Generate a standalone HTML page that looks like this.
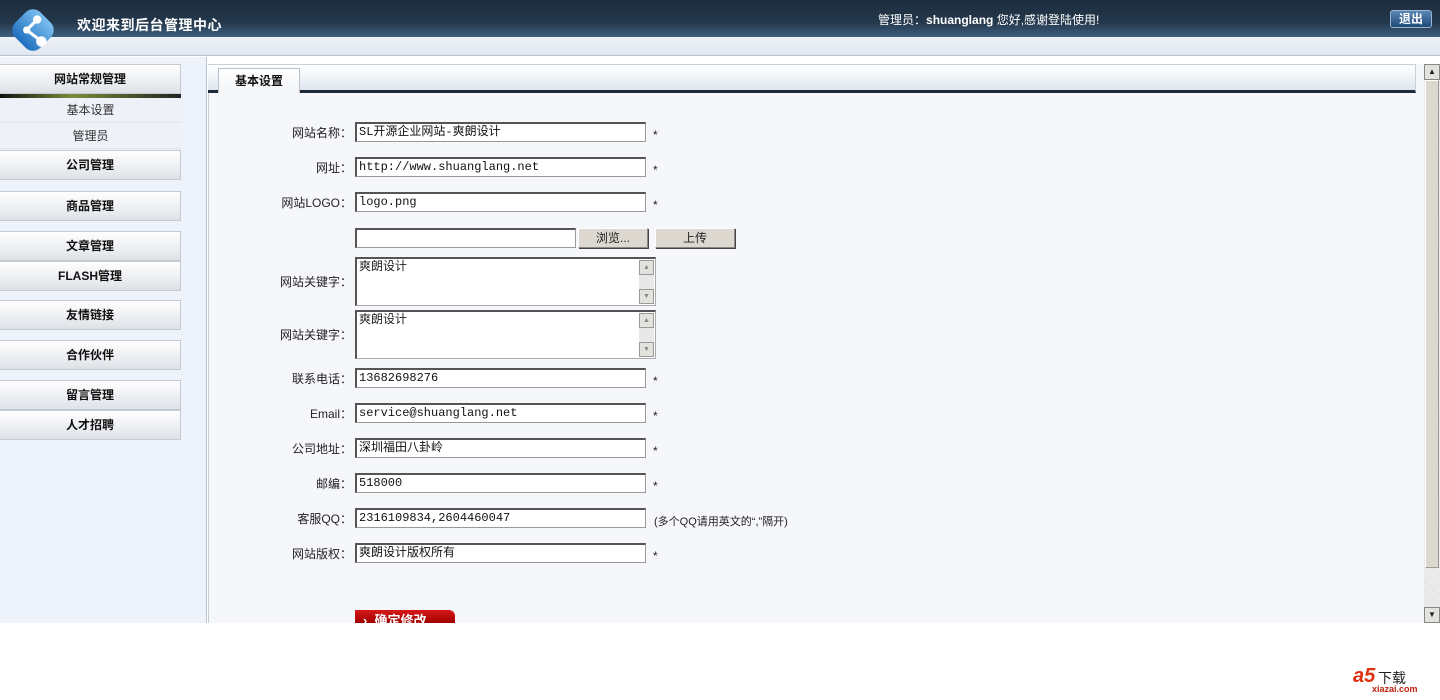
<!DOCTYPE html>
<html><head><meta charset="utf-8"><style>
*{margin:0;padding:0;box-sizing:border-box}
body{width:1440px;height:700px;background:#fff;position:relative;overflow:hidden;font-family:"Liberation Sans","Noto Sans CJK SC","WenQuanYi Zen Hei",sans-serif;font-size:12px;color:#222}
.a{position:absolute}
#hd{left:0;top:0;width:1440px;height:37px;background:linear-gradient(#1c2c3c,#24384c 60%,#3d5f80)}
#band{left:0;top:37px;width:1440px;height:19px;background:linear-gradient(#eef2f6,#dfe6ee);border-bottom:1px solid #b9c3cd}
#side{left:0;top:57px;width:207px;height:566px;background:#eef2fa;border-right:1px solid #b8c4d4}
.btn{position:absolute;left:0;width:181px;height:30px;background:linear-gradient(#fff,#eceef2 60%,#dde1e7);border:1px solid #c4cad2;border-left:none;font-weight:bold;font-size:12px;text-align:center;line-height:28px;color:#111}
.sub{position:absolute;left:0;width:181px;height:25px;text-align:center;line-height:25px;color:#333;background:#eef1f7;border-bottom:1px solid #dfe3ea}
#main{left:208px;top:64px;width:1216px;height:559px;background:#f5f7fa;border-left:1px solid #c5ccd6}
#tabbar{left:208px;top:64px;width:1208px;height:29px;background:linear-gradient(#fff,#f0f3f7 50%,#dfe6ef);border-bottom:3px solid #1f2b36;border-top:1px solid #c8d0da;border-right:1px solid #c8d0da}
#tab{left:218px;top:68px;width:82px;height:25px;background:linear-gradient(#fff,#f3f5f8);border:1px solid #b9c2cc;border-bottom:none;font-weight:bold;text-align:center;line-height:24px;font-size:12px;color:#111}
.lb{position:absolute;right:1088px;text-align:right;font-size:12px;color:#222;white-space:nowrap}
.in{position:absolute;left:355px;width:291px;height:20px;background:#fff;border:1px solid #999;border-top:2px solid #555;border-left:2px solid #555;font-family:"Liberation Mono","Noto Sans CJK SC",monospace;font-size:12px;line-height:16px;padding-left:2px;white-space:nowrap;color:#111}
.st{position:absolute;left:653px;font-size:12px}
.ta{position:absolute;left:355px;width:301px;height:49px;background:#fff;border:1px solid #aaa;border-top:2px solid #555;border-left:2px solid #555;font-size:12px;padding:0 2px;line-height:14px}
.sb{position:absolute;right:1px;top:1px;width:15px;height:44px;background:repeating-linear-gradient(45deg,#ddd 0 1px,#f4f4f4 1px 2px)}
.sb i,.sb b{position:absolute;left:0;width:15px;height:15px;background:#e4e2dc;border:1px solid #999;font-style:normal;font-size:7px;line-height:13px;text-align:center;color:#888}
.sb i{top:0}.sb b{bottom:0;font-weight:normal}
.fb{position:absolute;height:20px;background:#dcd8d0;border:1px solid #888;border-top-color:#fff;border-left-color:#fff;box-shadow:1px 1px 0 #444;text-align:center;line-height:18px;font-size:12px}
</style></head><body>
<div id="hd" class="a"></div>
<div id="band" class="a"></div>
<svg class="a" style="left:9px;top:6px" width="48" height="48" viewBox="0 0 46 46">
<defs><linearGradient id="g" x1="0" y1="0" x2="0" y2="1"><stop offset="0" stop-color="#7cc0f0"/><stop offset="1" stop-color="#1f6fc0"/></linearGradient></defs>
<rect x="6" y="6" width="34" height="34" rx="10" transform="rotate(45 23 23)" fill="url(#g)"/>
<line x1="27" y1="13" x2="17" y2="23" stroke="#fff" stroke-width="3"/><line x1="17" y1="23" x2="30" y2="33" stroke="#fff" stroke-width="3"/>
<circle cx="27" cy="13" r="4" fill="#fff"/><circle cx="17" cy="23" r="3.5" fill="#fff"/><circle cx="31" cy="34" r="5" fill="#fff"/></svg>
<div class="a" style="left:77px;top:15px;color:#fff;font-weight:bold;font-size:14px;letter-spacing:0.5px">欢迎来到后台管理中心</div>
<div class="a" style="left:878px;top:11px;color:#fff;font-size:12px">管理员：<b>shuanglang</b> 您好,感谢登陆使用!</div>
<div class="a" style="left:1390px;top:10px;width:42px;height:18px;border-radius:3px;background:linear-gradient(#5a86b6,#1f4a7a);border:1px solid #9bb4d0;color:#fff;font-weight:bold;text-align:center;line-height:16px;font-size:12px">退出</div>

<div id="side" class="a"></div>
<div class="btn" style="top:64px">网站常规管理</div>
<div class="a" style="left:0;top:94px;width:181px;height:4px;background:linear-gradient(90deg,#111,#7a8c3a 40%,#222)"></div>
<div class="sub" style="top:98px">基本设置</div>
<div class="sub" style="top:124px">管理员</div>
<div class="btn" style="top:150px">公司管理</div>
<div class="btn" style="top:191px">商品管理</div>
<div class="btn" style="top:231px">文章管理</div>
<div class="btn" style="top:261px">FLASH管理</div>
<div class="btn" style="top:300px">友情链接</div>
<div class="btn" style="top:340px">合作伙伴</div>
<div class="btn" style="top:380px">留言管理</div>
<div class="btn" style="top:410px">人才招聘</div>

<div id="main" class="a"></div>
<div id="tabbar" class="a"></div>
<div id="tab" class="a">基本设置</div>
<div class="a" style="left:1424px;top:64px;width:16px;height:559px;background:repeating-linear-gradient(45deg,#ddd 0 1px,#f6f6f6 1px 2px)"></div>
<div class="a" style="left:1424px;top:64px;width:16px;height:16px;background:#e4e2dc;border:1px solid #888;font-size:8px;text-align:center;line-height:14px">▲</div>
<div class="a" style="left:1425px;top:80px;width:14px;height:488px;background:#dcd8d0;border:1px solid #999;border-top-color:#fff;border-left-color:#fff"></div>
<div class="a" style="left:1424px;top:607px;width:16px;height:16px;background:#e4e2dc;border:1px solid #888;font-size:8px;text-align:center;line-height:14px">▼</div>

<div class="lb" style="top:124px">网站名称：</div><div class="in" style="top:122px">SL开源企业网站-爽朗设计</div><div class="st" style="top:128px">*</div>
<div class="lb" style="top:159px">网址：</div><div class="in" style="top:157px">http://www.shuanglang.net</div><div class="st" style="top:163px">*</div>
<div class="lb" style="top:194px">网站LOGO：</div><div class="in" style="top:192px">logo.png</div><div class="st" style="top:198px">*</div>
<div class="in" style="top:228px;width:221px"></div>
<div class="fb" style="left:578px;top:228px;width:70px">浏览...</div>
<div class="fb" style="left:655px;top:228px;width:80px">上传</div>
<div class="lb" style="top:273px">网站关键字：</div><div class="ta" style="top:257px">爽朗设计<div class="sb"><i>▲</i><b>▼</b></div></div>
<div class="lb" style="top:326px">网站关键字：</div><div class="ta" style="top:310px">爽朗设计<div class="sb"><i>▲</i><b>▼</b></div></div>
<div class="lb" style="top:370px">联系电话：</div><div class="in" style="top:368px">13682698276</div><div class="st" style="top:374px">*</div>
<div class="lb" style="top:405px">Email：</div><div class="in" style="top:403px">service@shuanglang.net</div><div class="st" style="top:409px">*</div>
<div class="lb" style="top:440px">公司地址：</div><div class="in" style="top:438px">深圳福田八卦岭</div><div class="st" style="top:444px">*</div>
<div class="lb" style="top:475px">邮编：</div><div class="in" style="top:473px">518000</div><div class="st" style="top:479px">*</div>
<div class="lb" style="top:510px">客服QQ：</div><div class="in" style="top:508px">2316109834,2604460047</div><div class="a" style="left:654px;top:513px;font-size:11px">(多个QQ请用英文的“,”隔开)</div>
<div class="lb" style="top:545px">网站版权：</div><div class="in" style="top:543px">爽朗设计版权所有</div><div class="st" style="top:549px">*</div>
<div class="a" style="left:355px;top:610px;width:100px;height:13px;overflow:hidden;border-radius:0 6px 0 0;background:linear-gradient(#d81818,#a00000);color:#fff;font-weight:bold;font-size:13px;padding-left:8px;line-height:22px">› &nbsp;确定修改</div>

<div class="a" style="left:1353px;top:665px;font-size:20px;font-weight:bold;color:#e03010;font-style:italic">a5</div>
<div class="a" style="left:1378px;top:668px;font-size:14px;color:#222">下载</div>
<div class="a" style="left:1372px;top:684px;font-size:9px;color:#c02010;font-weight:bold">xiazai.com</div>
</body></html>
